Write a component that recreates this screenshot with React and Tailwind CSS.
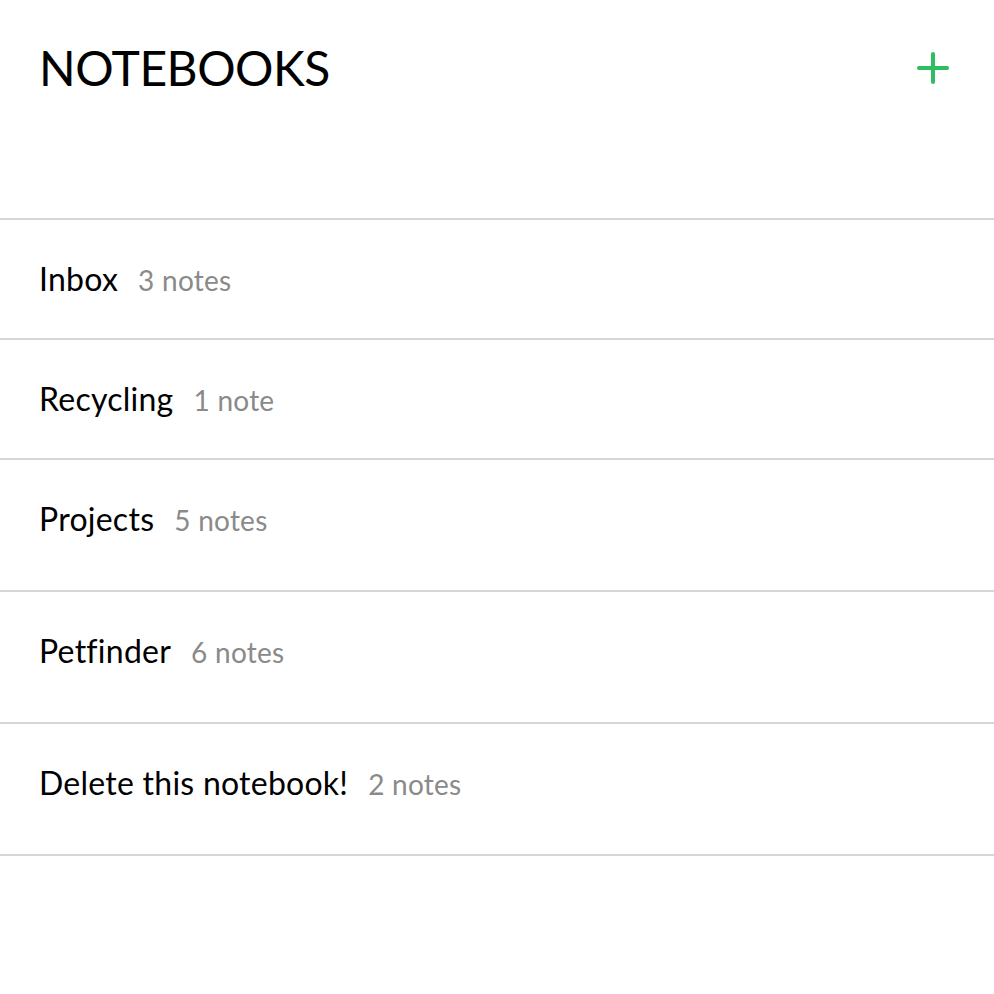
import React from 'react';

const notebooks = [
  { name: 'Inbox', count: '3 notes', h: 'h-[120px]' },
  { name: 'Recycling', count: '1 note', h: 'h-[120px]' },
  { name: 'Projects', count: '5 notes', h: 'h-[132px]' },
  { name: 'Petfinder', count: '6 notes', h: 'h-[132px]' },
  { name: 'Delete this notebook!', count: '2 notes', h: 'h-[132px]' },
];

const App = () => {
  return (
    <div className="w-[994px] min-h-[994px] bg-white font-['Lato',sans-serif] text-black">
      {/* Header */}
      <div className="h-[220px] flex items-start justify-between pl-[39px] pr-[45px] pt-[40px] border-b-2 border-[#d6d6d6]">
        <h1 className="text-[48px] leading-[56px] font-normal tracking-[-0.5px]">NOTEBOOKS</h1>
        <button className="mt-[12px] w-[32px] h-[32px] flex items-center justify-center">
          <svg width="32" height="32" viewBox="0 0 32 32" fill="none" stroke="#2dbe60" strokeWidth="4" strokeLinecap="round">
            <line x1="16" y1="2" x2="16" y2="30" />
            <line x1="2" y1="16" x2="30" y2="16" />
          </svg>
        </button>
      </div>

      {/* List */}
      <ul>
        {notebooks.map((nb) => (
          <li key={nb.name} className={`${nb.h} border-b-2 border-[#d6d6d6] pl-[39px] pt-[41px]`}>
            <div className="flex items-baseline gap-[20px]">
              <span className="text-[32px] leading-[36px] tracking-[0.25px]">{nb.name}</span>
              <span className="text-[28px] leading-[36px] tracking-[0.25px] text-[#8a8a8a]">{nb.count}</span>
            </div>
          </li>
        ))}
      </ul>
    </div>
  );
};

export default App;
